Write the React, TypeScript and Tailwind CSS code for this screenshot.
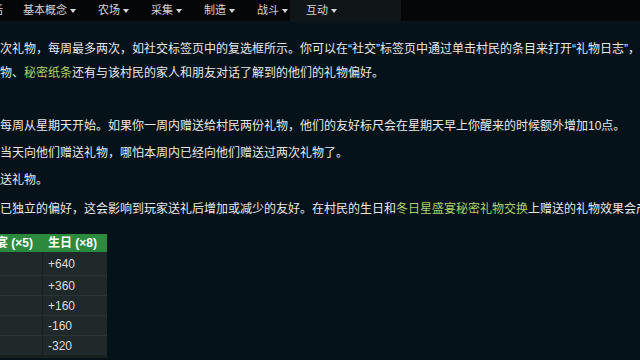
import React from 'react';

const Caret = () => (
  <svg width="6" height="4" viewBox="0 0 6 4" className="ml-[3px] mt-[1px]">
    <path d="M0 0 L6 0 L3 4 Z" fill="#d6d6d6" />
  </svg>
);

const navItems = ['基本概念', '农场', '采集', '制造', '战斗'];

const rows = ['+640', '+360', '+160', '-160', '-320'];

const Green = ({ children }: { children: React.ReactNode }) => (
  <span className="text-[#a9d26b]">{children}</span>
);

export default function App() {
  return (
    <div
      className="w-[640px] h-[360px] overflow-hidden bg-[#06121a] text-[#e6e8e8]"
      style={{ fontFamily: '"Liberation Sans", "Noto Sans CJK SC", sans-serif' }}
    >
      {/* Top nav */}
      <nav className="h-[22px] bg-[#040608] flex items-center text-[11px] text-[#d4d4d4] border-b border-[#0a161c]">
        <span className="ml-[-8px] mr-[20px]">话</span>
        <div className="flex items-center gap-[22px]">
          {navItems.map((n) => (
            <span key={n} className="flex items-center">
              {n}
              <Caret />
            </span>
          ))}
        </div>
        <span className="flex items-center h-full ml-[2px] pl-[16px] pr-[64px] bg-[#101517]">
          互动
          <Caret />
        </span>
      </nav>

      {/* Content */}
      <div className="pt-[15px] text-[12px] leading-[24px] whitespace-nowrap">
        <p>次礼物，每周最多两次，如社交标签页中的复选框所示。你可以在“社交”标签页中通过单击村民的条目来打开“礼物日志”，</p>
        <p>
          物、<Green>秘密纸条</Green>还有与该村民的家人和朋友对话了解到的他们的礼物偏好。
        </p>

        <ul className="mt-[29px] flex flex-col gap-[3px]">
          <li>每周从星期天开始。如果你一周内赠送给村民两份礼物，他们的友好标尺会在星期天早上你醒来的时候额外增加10点。</li>
          <li>当天向他们赠送礼物，哪怕本周内已经向他们赠送过两次礼物了。</li>
          <li>送礼物。</li>
        </ul>

        <p className="mt-[5px]">
          已独立的偏好，这会影响到玩家送礼后增加或减少的友好。在村民的生日和<Green>冬日星盛宴秘密礼物交换</Green>上赠送的礼物效果会产生倍增。
        </p>

        {/* Table */}
        <div className="mt-[13px] w-[107px] bg-[#1f2929] border-b-[3px] border-[#182020] text-[12px]">
          <div className="flex h-[18px] bg-[#2c8a3c] font-bold text-white leading-[18px]">
            <div className="w-[43px] flex justify-end pr-[10px] overflow-hidden">宴 (×5)</div>
            <div className="pl-[5px]">生日 (×8)</div>
          </div>
          {rows.map((r, i) => (
            <div
              key={r}
              className={i === 0 ? 'flex h-[23px]' : 'flex h-[20px] border-t border-[#2a3434]'}
            >
              <div className="w-[43px] border-r border-[#151d1d]" />
              <div className={i === 0 ? 'pl-[5px] text-[#dcdcdc] leading-[24px]' : 'pl-[5px] text-[#dcdcdc] leading-[20px]'}>{r}</div>
            </div>
          ))}
        </div>
      </div>
    </div>
  );
}
